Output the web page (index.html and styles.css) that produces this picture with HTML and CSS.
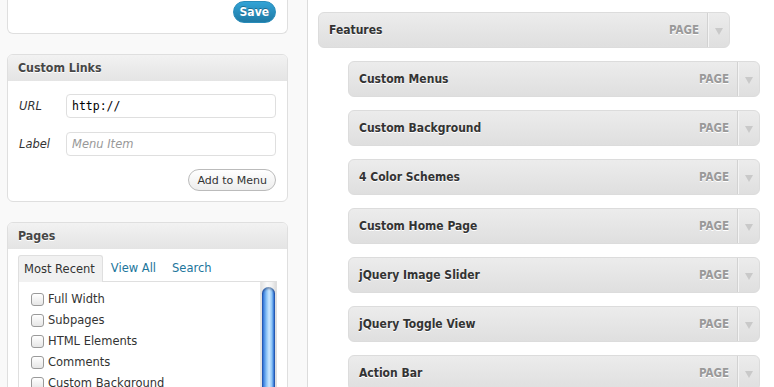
FILE: index.html
```html
<!DOCTYPE html>
<html>
<head>
<meta charset="utf-8">
<title>Menus</title>
<link rel="stylesheet" href="styles.css">
</head>
<body>
<div class="page">
  <aside class="sidebar">
    <div class="panel panel-cut">
      <button class="btn-primary">Save</button>
    </div>

    <div class="panel">
      <h3 class="panel-title">Custom Links</h3>
      <div class="panel-body links-body">
        <div class="field">
          <label class="field-label">URL</label>
          <input class="field-input mono" type="text" value="http://">
        </div>
        <div class="field">
          <label class="field-label">Label</label>
          <input class="field-input" type="text" placeholder="Menu Item">
        </div>
        <div class="actions">
          <button class="btn">Add to Menu</button>
        </div>
      </div>
    </div>

    <div class="panel">
      <h3 class="panel-title">Pages</h3>
      <div class="panel-body tabs-body">
        <div class="tabs">
          <span class="tab active">Most Recent</span>
          <a class="tab">View All</a>
          <a class="tab">Search</a>
        </div>
        <div class="tab-panel">
          <ul class="checklist">
            <li><span class="checkbox"></span><span>Full Width</span></li>
            <li><span class="checkbox"></span><span>Subpages</span></li>
            <li><span class="checkbox"></span><span>HTML Elements</span></li>
            <li><span class="checkbox"></span><span>Comments</span></li>
            <li><span class="checkbox"></span><span>Custom Background</span></li>
            <li><span class="checkbox"></span><span>Custom Home Page</span></li>
          </ul>
          <div class="scrollbar"><div class="thumb"></div></div>
        </div>
      </div>
    </div>
  </aside>

  <main class="menu">
    <div class="item">
      <span class="item-title">Features</span><span class="item-type">PAGE</span>
      <span class="item-toggle"><svg width="8" height="7" viewBox="0 0 8 7"><polygon points="0,0 8,0 4,7" /></svg></span>
    </div>
    <div class="item sub">
      <span class="item-title">Custom Menus</span><span class="item-type">PAGE</span>
      <span class="item-toggle"><svg width="8" height="7" viewBox="0 0 8 7"><polygon points="0,0 8,0 4,7" /></svg></span>
    </div>
    <div class="item sub">
      <span class="item-title">Custom Background</span><span class="item-type">PAGE</span>
      <span class="item-toggle"><svg width="8" height="7" viewBox="0 0 8 7"><polygon points="0,0 8,0 4,7" /></svg></span>
    </div>
    <div class="item sub">
      <span class="item-title">4 Color Schemes</span><span class="item-type">PAGE</span>
      <span class="item-toggle"><svg width="8" height="7" viewBox="0 0 8 7"><polygon points="0,0 8,0 4,7" /></svg></span>
    </div>
    <div class="item sub">
      <span class="item-title">Custom Home Page</span><span class="item-type">PAGE</span>
      <span class="item-toggle"><svg width="8" height="7" viewBox="0 0 8 7"><polygon points="0,0 8,0 4,7" /></svg></span>
    </div>
    <div class="item sub">
      <span class="item-title">jQuery Image Slider</span><span class="item-type">PAGE</span>
      <span class="item-toggle"><svg width="8" height="7" viewBox="0 0 8 7"><polygon points="0,0 8,0 4,7" /></svg></span>
    </div>
    <div class="item sub">
      <span class="item-title">jQuery Toggle View</span><span class="item-type">PAGE</span>
      <span class="item-toggle"><svg width="8" height="7" viewBox="0 0 8 7"><polygon points="0,0 8,0 4,7" /></svg></span>
    </div>
    <div class="item sub">
      <span class="item-title">Action Bar</span><span class="item-type">PAGE</span>
      <span class="item-toggle"><svg width="8" height="7" viewBox="0 0 8 7"><polygon points="0,0 8,0 4,7" /></svg></span>
    </div>
  </main>
</div>
</body>
</html>
```

FILE: styles.css
```css
html, body {
  margin: 0;
  height: 100%;
  overflow: hidden;
}

body {
  font-family: "DejaVu Sans", Verdana, sans-serif;
  font-size: 11.5px;
  color: #333;
  background: #fff;
}

.page {
  display: flex;
  height: 100%;
}

/* ---------- sidebar ---------- */
.sidebar {
  flex: 0 0 auto;
  width: 281px;
  padding: 0 19px 0 7px;
  background: #f9f9f9;
  border-right: 1px solid #dcdcdc;
}

.panel {
  background: #fff;
  border: 1px solid #dfdfdf;
  border-radius: 6px;
  margin-bottom: 20px;
}

.panel-cut {
  border-top: none;
  border-radius: 0 0 6px 6px;
  padding: 1px 11px 10px;
  display: flex;
  justify-content: flex-end;
}

.panel-title {
  margin: 0;
  height: 26px;
  line-height: 27px;
  padding: 0 10px;
  font-family: "DejaVu Sans Condensed", "DejaVu Sans", sans-serif;
  font-stretch: condensed;
  font-size: 12.3px;
  font-weight: bold;
  color: #464646;
  text-shadow: 0 1px 0 #fff;
  background: linear-gradient(#f2f2f2, #e4e4e4);
  border-radius: 5px 5px 0 0;
}

.btn-primary {
  height: 22px;
  padding: 0 6px;
  border: 1px solid #298cba;
  border-radius: 11px;
  background: linear-gradient(#32a3d6, #1f7aa5);
  color: #fff;
  font-family: "DejaVu Sans Condensed", "DejaVu Sans", sans-serif;
  font-stretch: condensed;
  font-weight: bold;
  font-size: 12px;
  text-shadow: 0 -1px 0 rgba(0, 0, 0, 0.3);
}

.links-body {
  padding: 13px 11px 10px;
}

.field {
  display: flex;
  align-items: center;
  margin-bottom: 14px;
}

.field + .field {
  margin-bottom: 13px;
}

.field-label {
  width: 47px;
  font-style: italic;
  font-size: 11.5px;
  color: #333;
}

.field-input {
  box-sizing: border-box;
  width: 210px;
  height: 24px;
  margin: 0;
  padding: 0 5px;
  border: 1px solid #dfdfdf;
  border-radius: 4px;
  background: #fff;
  font-family: "DejaVu Sans", sans-serif;
  font-size: 11.5px;
  color: #333;
  outline: none;
}

.field-input::placeholder {
  color: #999;
  font-style: italic;
}

.field-input.mono {
  font-family: "DejaVu Sans Mono", monospace;
  font-size: 11.5px;
  color: #000;
}

.actions {
  display: flex;
  justify-content: flex-end;
}

.btn {
  height: 22px;
  padding: 0 8px;
  border: 1px solid #bbb;
  border-radius: 11px;
  background: linear-gradient(#fff, #ededed);
  color: #333;
  font-family: "DejaVu Sans", sans-serif;
  font-size: 11px;
}

/* ---------- tabs ---------- */
.tabs-body {
  padding: 6px 10px 0;
}

.tabs {
  display: flex;
  align-items: flex-end;
  height: 26px;
}

.tab {
  height: 26px;
  line-height: 27px;
  padding: 0 8px;
  color: #21759b;
  font-size: 11.5px;
  box-sizing: border-box;
}

.tab.active {
  height: 27px;
  margin-bottom: -1px;
  padding: 0 7px 0 5px;
  border: 1px solid #dfdfdf;
  border-bottom: none;
  border-radius: 3px 3px 0 0;
  background: #f1f1f1;
  color: #333;
  position: relative;
  z-index: 1;
}

.tab-panel {
  display: flex;
  height: 200px;
  border: 1px solid #dfdfdf;
}

.checklist {
  flex: 1;
  list-style: none;
  margin: 0;
  padding: 6px 0 0 12px;
}

.checklist li {
  display: flex;
  align-items: center;
  height: 21px;
}

.checkbox {
  box-sizing: border-box;
  width: 13px;
  height: 13px;
  margin: 2px 4px 0 0;
  border: 1px solid #9a9a9a;
  border-radius: 3px;
  background: linear-gradient(#fff, #e6e6e6);
}

.scrollbar {
  width: 16px;
  padding-top: 5px;
  box-sizing: border-box;
  background: linear-gradient(to right, #e2e2e2, #fafafa 40%, #f2f2f2 70%, #dcdcdc);
  border-left: 1px solid #e6e6e6;
}

.thumb {
  width: 13px;
  height: 200px;
  margin-left: 1px;
  border-radius: 7px 7px 0 0;
  background: linear-gradient(to right, #1f55b8 0%, #3d82e0 12%, #8cc4f7 35%, #cde8ff 55%, #8fc6f6 75%, #3c7fdc 90%, #1d50b0 100%);
  box-shadow: inset 0 2px 2px rgba(0, 0, 40, 0.35);
}

/* ---------- menu items ---------- */
.menu {
  flex: 1;
  padding: 12px 0 0 10px;
}

.item {
  display: flex;
  align-items: stretch;
  width: 410px;
  height: 34px;
  margin-bottom: 13px;
  border: 1px solid #dcdcdc;
  border-radius: 6px;
  background: linear-gradient(#ececec, #dfdfdf);
}

.item.sub {
  margin-left: 30px;
}

.item-title {
  flex: 1;
  display: flex;
  align-items: center;
  padding-left: 10px;
  font-family: "DejaVu Sans Condensed", "DejaVu Sans", sans-serif;
  font-stretch: condensed;
  font-size: 12px;
  font-weight: bold;
  color: #333;
  text-shadow: 0 1px 0 #fff;
}

.item-type {
  display: flex;
  align-items: center;
  padding-right: 8px;
  font-family: "DejaVu Sans Condensed", "DejaVu Sans", sans-serif;
  font-stretch: condensed;
  font-size: 11.5px;
  font-weight: bold;
  color: #999;
  text-shadow: 0 1px 0 #fff;
}

.item-toggle {
  width: 21px;
  display: flex;
  align-items: center;
  justify-content: center;
  border-left: 1px solid #d2d2d2;
  box-shadow: inset 1px 0 0 #f4f4f4;
}

.item-toggle svg {
  display: block;
  margin-top: 2px;
  fill: #c9c9c9;
}
```
